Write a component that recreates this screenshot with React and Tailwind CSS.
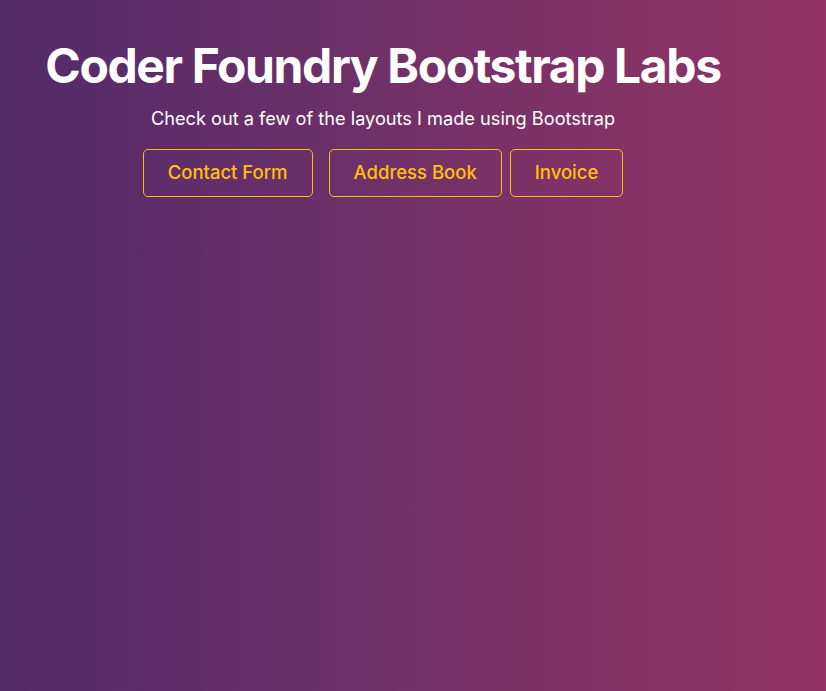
export default function App() {
  return (
    <div
      className="min-h-[691px] w-full bg-gradient-to-r from-[#522a6a] to-[#943364] text-white"
      style={{ fontFamily: 'Inter, "Noto Sans", sans-serif' }}
    >
      <div className="w-[766px] pt-[36px] text-center">
        <h1 className="text-[48px] font-bold leading-[60px] tracking-[-0.029em]">
          Coder Foundry Bootstrap Labs
        </h1>
        <p className="mt-[9px] text-[18.2px] leading-[27px]">
          Check out a few of the layouts I made using Bootstrap
        </p>
        <div className="mt-[17px] flex justify-center">
          <button className="h-[48px] px-6 rounded-[5px] border border-[#ffc107] text-[18.5px] text-[#ffc107] font-medium">
            Contact Form
          </button>
          <button className="ml-4 h-[48px] px-6 rounded-[5px] border border-[#ffc107] text-[18.5px] text-[#ffc107] font-medium">
            Address Book
          </button>
          <button className="ml-2 h-[48px] px-6 rounded-[5px] border border-[#ffc107] text-[18.5px] text-[#ffc107] font-medium">
            Invoice
          </button>
        </div>
      </div>
    </div>
  );
}
